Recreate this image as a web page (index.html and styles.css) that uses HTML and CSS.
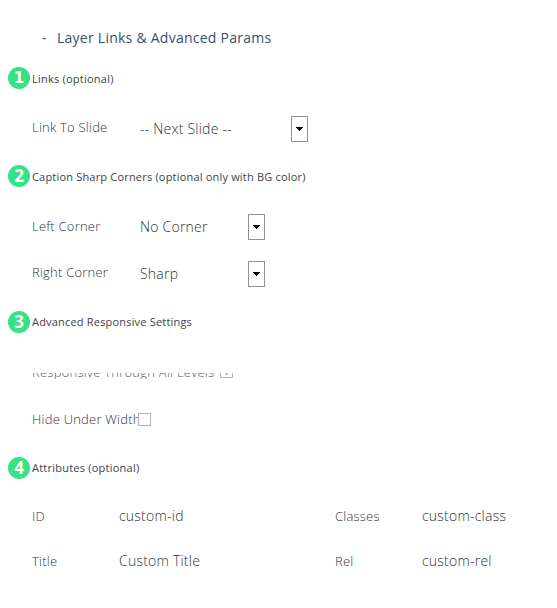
FILE: index.html
```html
<!DOCTYPE html>
<html lang="en">
<head>
<meta charset="utf-8">
<title>Layer Links &amp; Advanced Params</title>
<link rel="stylesheet" href="styles.css">
</head>
<body>
<main class="panel">
  <h1 class="title"><span class="dash">-</span><span>Layer Links &amp; Advanced Params</span></h1>

  <section class="links">
    <h2><span class="badge serifed">1</span><span class="lowered">Links (optional)</span></h2>
    <div class="row slide">
      <span class="label raised">Link To Slide</span>
      <span class="value wide">-- Next Slide --</span>
      <span class="arrow"><svg width="7" height="4" viewBox="0 0 7 4"><path d="M0 0h7v1H6v1H5v1H4v1H3V3H2V2H1V1H0z"/></svg></span>
    </div>
  </section>

  <section class="corners">
    <h2><span class="badge">2</span><span class="lowered tight">Caption Sharp Corners (optional only with BG color)</span></h2>
    <div class="row left">
      <span class="label">Left Corner</span>
      <span class="value">No Corner</span>
      <span class="arrow"><svg width="7" height="4" viewBox="0 0 7 4"><path d="M0 0h7v1H6v1H5v1H4v1H3V3H2V2H1V1H0z"/></svg></span>
    </div>
    <div class="row right">
      <span class="label raised">Right Corner</span>
      <span class="value">Sharp</span>
      <span class="arrow"><svg width="7" height="4" viewBox="0 0 7 4"><path d="M0 0h7v1H6v1H5v1H4v1H3V3H2V2H1V1H0z"/></svg></span>
    </div>
  </section>

  <section class="responsive">
    <h2><span class="badge">3</span><span class="tight">Advanced Responsive Settings</span></h2>
    <div class="clip">
      <div class="clip-inner">
        <span class="levels">Responsive Through All Levels</span>
        <span class="check"><svg width="13" height="13" viewBox="0 0 13 13"><path d="M4 5l2.5 4L9 5" fill="none" stroke="#a3abdc" stroke-width="1.7"/></svg></span>
      </div>
    </div>
    <div class="row hide">
      <span>Hide Under Width</span><span class="check"></span>
    </div>
  </section>

  <section class="attributes">
    <h2><span class="badge">4</span><span>Attributes (optional)</span></h2>
    <div class="attrs">
      <span>ID</span><span class="av">custom-id</span><span>Classes</span><span class="av">custom-class</span>
      <span>Title</span><span class="av">Custom Title</span><span>Rel</span><span class="av">custom-rel</span>
    </div>
  </section>
</main>
</body>
</html>
```
FILE: styles.css
```css
* { box-sizing: border-box; }
body {
  margin: 0;
  background: #fff;
  color: #2e343b;
  font: 300 13px/24px "Open Sans", "Noto Sans", sans-serif;
  letter-spacing: .22px;
  white-space: nowrap;
}
.panel { width: 557px; height: 608px; padding-top: 26px; overflow: hidden; }
.title {
  display: flex;
  margin: 0;
  padding-left: 42px;
  height: 24px;
  font-size: 14px;
  font-weight: 500;
  letter-spacing: .25px;
  color: #35506e;
}
.dash { width: 15px; }
h2 {
  display: flex;
  align-items: center;
  height: 24px;
  margin: 0;
  padding-left: 8px;
  font-size: 11px;
  font-weight: 500;
  letter-spacing: .23px;
  color: #3d434a;
}
.tight { letter-spacing: .19px; }
.lowered { padding-top: 2px; }
.badge {
  flex: none;
  width: 22px;
  height: 22px;
  margin-right: 2px;
  border-radius: 50%;
  background: #35e384;
  color: #fff;
  font: 700 17px/21px "Open Sans", sans-serif;
  letter-spacing: 0;
  text-align: center;
}
.serifed { font: 700 15px/22px "DejaVu Sans", sans-serif; }
.row { display: flex; align-items: center; height: 26px; padding-left: 32px; }
.label { width: 108px; padding-bottom: 2px; }
.raised { padding-bottom: 4px; }
.value { width: 108px; font-size: 14px; }
.wide { width: 151px; }
.arrow {
  display: flex;
  align-items: center;
  justify-content: center;
  width: 17px;
  height: 26px;
  border: 1px solid #929292;
}
.links { margin-top: 16px; }
.slide { margin-top: 26px; }
.corners { margin-top: 22px; }
.left { margin-top: 26px; }
.right { margin-top: 21px; }
.responsive { margin-top: 23px; }
.clip { height: 6px; margin-top: 39px; padding-left: 32px; overflow: hidden; }
.clip-inner { display: flex; align-items: center; height: 24px; margin-top: -13px; gap: 6px; }
.levels { letter-spacing: .25px; color: #565c66; }
.clip .check { position: relative; top: -1px; }
.check { width: 13px; height: 13px; border: 1px solid #b4b4b4; }
.check svg { display: block; margin: -1px; }
.hide { height: 24px; margin-top: 28px; }
.hide .check { margin-left: -3px; background: #fff; }
.attributes { margin-top: 25px; }
.attrs {
  display: grid;
  grid-template-columns: 87px 216px 87px auto;
  row-gap: 21px;
  margin-top: 24px;
  padding-left: 32px;
}
.av { font-size: 14px; }
```
